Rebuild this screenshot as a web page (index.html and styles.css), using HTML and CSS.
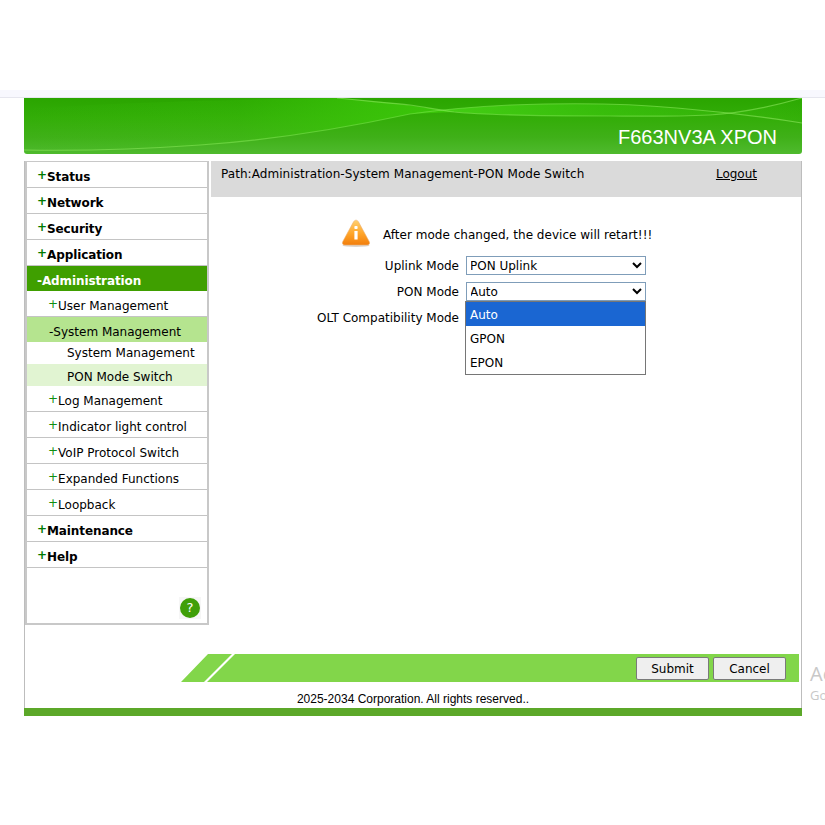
FILE: index.html
```html
<!DOCTYPE html>
<html lang="en">
<head>
<meta charset="utf-8">
<title>F663NV3A XPON</title>
<link rel="stylesheet" href="styles.css">
</head>
<body>
<div class="topband"></div>
<div class="frame">
  <header class="banner">
    <svg class="banner-art" viewBox="0 0 778 56" preserveAspectRatio="none" aria-hidden="true">
      <defs>
        <linearGradient id="sweep" x1="0" y1="0" x2="1" y2="0">
          <stop offset="0" stop-color="#3cc80a" stop-opacity="0"/>
          <stop offset=".5" stop-color="#3cc80a" stop-opacity=".2"/>
          <stop offset=".8" stop-color="#3cc80a" stop-opacity=".7"/>
          <stop offset="1" stop-color="#3cc80a" stop-opacity=".95"/>
        </linearGradient>
        <linearGradient id="lens" x1="0" y1="0" x2="1" y2="0">
          <stop offset="0" stop-color="#48d418" stop-opacity=".95"/>
          <stop offset=".5" stop-color="#3ecb10" stop-opacity=".55"/>
          <stop offset="1" stop-color="#3ecb10" stop-opacity=".1"/>
        </linearGradient>
        <linearGradient id="streak" x1="0" y1="0" x2="1" y2="0">
          <stop offset="0" stop-color="#8fe860" stop-opacity=".6"/>
          <stop offset=".5" stop-color="#7ee850" stop-opacity=".5"/>
          <stop offset="1" stop-color="#8fe860" stop-opacity=".6"/>
        </linearGradient>
      </defs>
      <path d="M0 11 C70 6 170 2 313 0 L350 3 C370 5 386 7 430 14 L386 16 C330 28 250 42 176 47 C120 51 60 53 0 52 Z" fill="url(#sweep)"/>
      <path d="M386 16 C400 14 440 9 486 7 C540 5 600 5 653 10 C700 14 740 19 778 25 L778 0 C750 8 720 15 686 17 C640 19 600 18 586 18 C540 18 470 18 430 14 C415 12 400 13 386 16 Z" fill="url(#lens)"/>
      <path d="M0 52 C60 53 120 51 176 47 C250 42 330 28 386 16 C400 14 440 9 486 7 C540 5 600 5 653 10 C700 14 740 19 778 25" fill="none" stroke="url(#streak)" stroke-width="1.2"/>
      <path d="M313 0 C340 3 365 5 386 7 C400 9 415 12 430 14 C470 18 540 18 586 18 C600 18 640 19 686 17 C720 15 750 8 778 0" fill="none" stroke="url(#streak)" stroke-width="1.2"/>
    </svg>
    <span class="model">F663NV3A XPON</span>
  </header>

  <div class="shell">
    <div class="workspace">
      <nav class="sidebar">
        <div class="item top"><b class="plus">+</b>Status</div>
        <div class="item top"><b class="plus">+</b>Network</div>
        <div class="item top"><b class="plus">+</b>Security</div>
        <div class="item top"><b class="plus">+</b>Application</div>
        <div class="item top active">-Administration</div>
        <div class="item sub"><span class="plus">+</span>User Management</div>
        <div class="item sub open">-System Management</div>
        <div class="leaf">System Management</div>
        <div class="leaf current">PON Mode Switch</div>
        <div class="item sub"><span class="plus">+</span>Log Management</div>
        <div class="item sub"><span class="plus">+</span>Indicator light control</div>
        <div class="item sub"><span class="plus">+</span>VoIP Protocol Switch</div>
        <div class="item sub"><span class="plus">+</span>Expanded Functions</div>
        <div class="item sub"><span class="plus">+</span>Loopback</div>
        <div class="item top"><b class="plus">+</b>Maintenance</div>
        <div class="item top"><b class="plus">+</b>Help</div>
        <div class="help-row"><span class="help-tile"><span class="help">?</span></span></div>
      </nav>

      <main class="main">
        <div class="pathbar">
          <span class="path">Path:Administration-System Management-PON Mode Switch</span>
          <a class="logout" href="#">Logout</a>
        </div>
        <div class="notice">
          <svg class="warn" viewBox="0 0 30 28" aria-hidden="true">
            <defs>
              <linearGradient id="amber" x1="0" y1="0" x2="0" y2="1">
                <stop offset="0" stop-color="#ffd070"/>
                <stop offset=".55" stop-color="#ffa428"/>
                <stop offset="1" stop-color="#f27e0c"/>
              </linearGradient>
            </defs>
            <ellipse cx="15" cy="26.500" rx="13.500" ry="1.500" fill="#b0a090" opacity=".45"/>
            <path d="M15 1.200c1.200 0 2 .8 2.600 1.900l10.600 19.400c1 1.900.2 3.500-2 3.500H3.800c-2.200 0-3-1.600-2-3.500L12.400 3.100C13 2 13.800 1.200 15 1.200Z" fill="url(#amber)" stroke="#eeb070" stroke-width=".6"/>
            <rect x="13.400" y="12" width="3.200" height="8.500" fill="#fff"/>
            <rect x="13.400" y="7" width="3.200" height="3" rx=".8" fill="#fff"/>
          </svg>
          <span class="notice-text">After mode changed, the device will retart!!!</span>
        </div>
        <form class="form">
          <label class="lbl" for="uplink">Uplink Mode</label>
          <select class="sel" id="uplink"><option>PON Uplink</option></select>
          <label class="lbl" for="pon">PON Mode</label>
          <div class="sel-wrap">
            <select class="sel" id="pon"><option>Auto</option></select>
            <ul class="menu">
              <li class="picked">Auto</li>
              <li>GPON</li>
              <li>EPON</li>
            </ul>
          </div>
          <label class="lbl">OLT Compatibility Mode</label>
          <span></span>
        </form>
      </main>
    </div>

    <div class="actions">
      <div class="actionbar">
        <button class="btn" type="button">Submit</button>
        <button class="btn" type="button">Cancel</button>
      </div>
    </div>
    <p class="copy">2025-2034 Corporation. All rights reserved..</p>
  </div>
  <div class="bottombar"></div>
</div>
<div class="watermark"><div class="wm1">Ac</div><div class="wm2">Go</div></div>
</body>
</html>
```
FILE: styles.css
```css
html, body { margin: 0; padding: 0; background: #fff; overflow: hidden; }
body { height: 825px; width: 825px; position: relative; font-family: "DejaVu Sans", sans-serif; font-size: 12px; color: #000; }

.topband { height: 7px; margin-top: 90px; background: #f8f8fe; border-bottom: 1px solid #e6e6ee; }

.frame { width: 778px; margin-left: 24px; }

.banner { position: relative; height: 56px; border-radius: 0 0 3px 3px; overflow: hidden;
  background: linear-gradient(180deg, #2aa500 0%, #33ad08 35%, #3fb018 70%, #4fba2e 100%); }
.banner-art { position: absolute; inset: 0; width: 100%; height: 100%; }
.model { position: absolute; right: 25px; top: 27px; font-family: "Liberation Sans", sans-serif; font-size: 20px; line-height: 24px; color: #fff; }

.shell { margin-top: 7px; border-left: 1px solid #bdbdbd; border-right: 1px solid #bdbdbd; }
.workspace { display: flex; height: 465px; }

.sidebar { width: 180px; height: 461px; border: 2px solid #c8c8c8; border-top-width: 1px; display: flex; flex-direction: column; flex: none; }

.item { height: 25px; border-bottom: 1px solid #c4c4c4; white-space: nowrap; color: #000; flex: none; }
.plus { display: inline-block; vertical-align: 2px; line-height: 1; }
.top { padding-left: 10px; font-weight: 700; font-size: 12px; line-height: 30px; letter-spacing: -.1px; }
.top .plus { font-size: 12px; color: #007a00; }
.sub { padding-left: 22px; line-height: 30px; }
.sub .plus { font-size: 12px; color: #0f8f10; font-weight: 400; margin-left: -1px; }
.active { background: #3f9f00; color: #fff; height: 24px; border-bottom-color: #3f9f00; line-height: 30px; }
.open { background: #b5e48f; border-bottom: 0; line-height: 30px; }
.leaf { padding-left: 40px; height: 22px; line-height: 23px; flex: none; }
.leaf.current { background: #e1f4d2; line-height: 26px; }
.help-row { flex: 1; display: flex; justify-content: flex-end; align-items: flex-end; padding: 0 6px 4px 0; }
.help-tile { width: 22px; height: 22px; background: #f6f6f6; display: flex; align-items: center; justify-content: center; }
.help { width: 20px; height: 20px; border-radius: 50%; background: #3f9f08; color: #fff; text-align: center; line-height: 20px; font-size: 13px; }

.main { flex: 1; margin-left: 2px; min-width: 0; }
.pathbar { height: 36px; background: #dadada; display: flex; justify-content: space-between; padding: 5px 44px 0 10px; box-sizing: border-box; line-height: 16px; }
.path { letter-spacing: .06px; }
.logout { color: #000; text-decoration: underline; }

.notice { display: flex; align-items: center; margin: 22px 0 0 130px; height: 28px; }
.warn { width: 30px; height: 28px; margin-right: 12px; flex: none; }
.notice-text { padding-top: 4px; letter-spacing: .02px; }

.form { display: grid; grid-template-columns: 248px 180px; column-gap: 7px; grid-auto-rows: 26px; margin-top: 5px; align-items: center; }
.lbl { text-align: right; white-space: nowrap; padding-top: 2px; }
.sel-wrap { position: relative; height: 19px; }
.sel { width: 180px; height: 19px; box-sizing: border-box; border: 1px solid #7f9db9; background: #fff; font: inherit; color: #000; padding: 1px 0 0 0; margin: 0; display: block; border-radius: 0; text-indent: -1px; }
.menu { position: absolute; left: -1px; top: 19px; width: 179px; margin: 0; padding: 0; list-style: none; background: #fff; border: 1px solid #767676; z-index: 2; }
.menu li { height: 24px; line-height: 26px; padding-left: 4px; font-size: 12px; }
.menu .picked { background: #1a66d2; color: #fff; }

.actions { display: flex; justify-content: flex-end; margin-top: 28px; padding-right: 2px; }
.actionbar { width: 618px; height: 28px; box-sizing: border-box; background: #82d64a; display: flex; justify-content: flex-end; align-items: center; gap: 4px; padding-right: 13px; clip-path: polygon(0 100%, 27px 0, 51px 0, 23px 100%, 26px 100%, 54px 0, 100% 0, 100% 100%); }
.btn { width: 73px; height: 23px; padding: 2px 0 0; border: 1px solid #7a7a7a; border-radius: 2px; background: #efefef; font: inherit; color: #000; }

.copy { margin: 9px 0 0; height: 17px; line-height: 17px; font-family: "Liberation Sans", sans-serif; font-size: 12px; text-align: center; }
.bottombar { height: 8px; background: #5ca829; }

.watermark { position: absolute; left: 810px; top: 662px; white-space: nowrap; color: #c8c8c8; font-family: "Open Sans", sans-serif; }
.wm1 { font-size: 20px; line-height: 24px; }
.wm2 { font-size: 13px; line-height: 18px; }
```
